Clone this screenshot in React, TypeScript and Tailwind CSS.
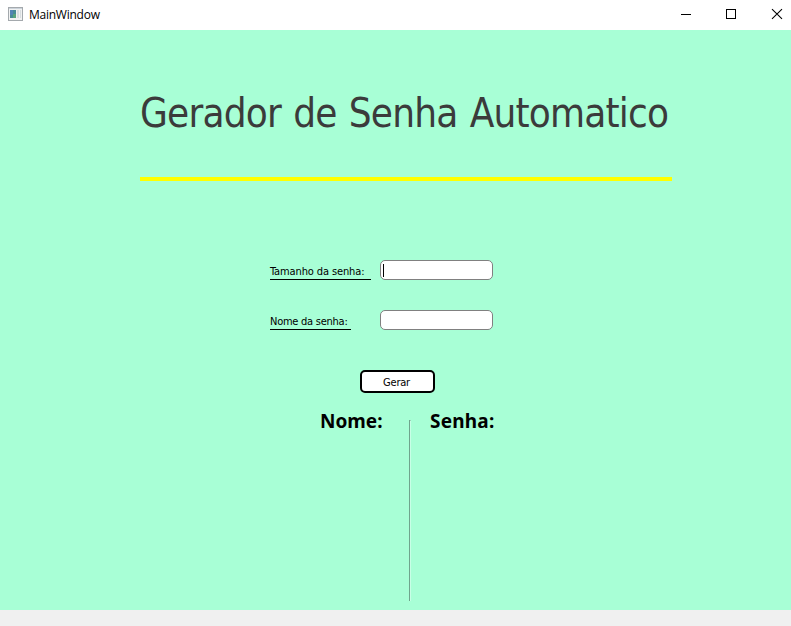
const face = "font-['DejaVu_Sans_Condensed','DejaVu_Sans',sans-serif] [font-stretch:condensed]";

function TitleBar() {
  return (
    <header className="flex h-[30px] items-start bg-white">
      <svg className="ml-2 mt-[7px] shrink-0" width="15" height="14" viewBox="0 0 15 14" shapeRendering="crispEdges">
        <rect width="15" height="14" fill="#a4a9ad" />
        <rect x="1" y="1" width="13" height="1" fill="#cbd3da" />
        <rect x="1" y="2" width="13" height="11" fill="#f1f2f2" />
        <rect x="2" y="3" width="6" height="8" fill="#478b96" />
        <rect x="2" y="3" width="3" height="5" fill="#5284b4" />
        <rect x="5" y="7" width="3" height="4" fill="#58a47c" />
        <rect x="9" y="3" width="2" height="8" fill="#d8dddf" />
        <rect x="12" y="3" width="1" height="8" fill="#d8dddf" />
      </svg>
      <span className="ml-[6px] mt-[7px] whitespace-nowrap font-['Open_Sans',sans-serif] text-[12px] leading-4 tracking-[-0.25px] text-black [font-stretch:normal]">
        MainWindow
      </span>
      <svg className="ml-auto shrink-0" width="110" height="30" viewBox="0 0 110 30" fill="none" stroke="#000">
        <path d="M0 14.5h10M45.500 9.500h9v9h-9z" shapeRendering="crispEdges" />
        <path d="M91 9.200l10 9.600M101 9.200l-10 9.600" strokeWidth="1.100" />
      </svg>
    </header>
  );
}

export default function App() {
  return (
    <div className={`flex h-[626px] w-[791px] flex-col overflow-hidden text-black ${face}`}>
      <TitleBar />
      <main className="h-[580px] bg-[#a8ffd6]">
        <div className="ml-[140px] flex h-[151px] w-[532px] items-start border-b-4 border-[#ffff00] pt-[59px]">
          <h1 className="whitespace-nowrap text-[40px] leading-[48px] tracking-[-0.8px] text-[#3b3b3b] [word-spacing:1.6px]">
            Gerador de Senha Automatico
          </h1>
        </div>
        <form className="ml-[270px] pt-[79px]" onSubmit={(e) => e.preventDefault()}>
          <div className="flex h-5">
            <label className="mr-[9px] h-5 w-[101px] whitespace-nowrap border-b border-black pt-[4px] text-[11px] leading-[15px] tracking-[-0.12px]">
              Tamanho da senha:
            </label>
            <div className="flex h-5 w-[113px] items-center rounded-[5px] border border-[#808080] bg-white pl-[2px]">
              <span className="h-[13px] w-px bg-black" />
            </div>
          </div>
          <div className="mt-[30px] flex h-5">
            <label className="mr-[29px] h-5 w-[81px] whitespace-nowrap border-b border-black pt-[4px] text-[11px] leading-[15px] tracking-[-0.25px]">
              Nome da senha:
            </label>
            <div className="h-5 w-[113px] rounded-[5px] border border-[#808080] bg-white" />
          </div>
          <button className="ml-[90px] mt-10 block h-[23px] w-[75px] rounded-[5px] border-2 border-black bg-white pr-[2px] pt-[2px] text-[11px] leading-[17px] tracking-[-0.2px]">
            Gerar
          </button>
        </form>
        <section className="ml-[320px] mt-[16px] flex font-['Noto_Sans',sans-serif] text-[19px] font-bold leading-[24px] [font-stretch:normal]">
          <h2 className="w-[89px] whitespace-nowrap">Nome:</h2>
          <div className="mt-[11px] h-[181px] w-[2px] border-l border-r border-t border-l-[#6fa58d] border-r-[#c8ffe6] border-t-[#6fa58d]" />
          <h2 className="ml-[19px] whitespace-nowrap tracking-[0.2px]">Senha:</h2>
        </section>
      </main>
      <footer className="h-4 bg-[#f0f0f0]" />
    </div>
  );
}
